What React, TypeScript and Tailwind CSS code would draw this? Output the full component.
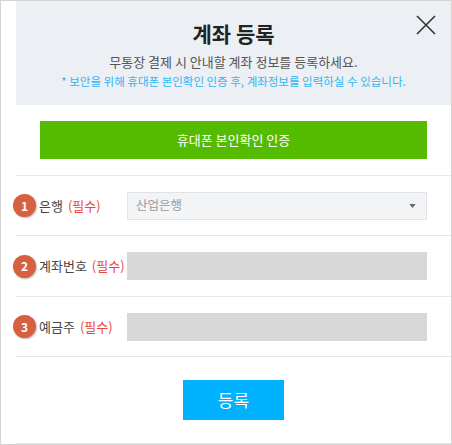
const FONT = { fontFamily: '"Noto Sans CJK KR", "Noto Sans", sans-serif' };

const rows = [
  { no: 1, label: '은행', kind: 'select' as const, h: 'h-[60px]' },
  { no: 2, label: '계좌번호', kind: 'input' as const, h: 'h-[61px]' },
  { no: 3, label: '예금주', kind: 'input' as const, h: 'h-[60px]' },
];

function Badge({ no }: { no: number }) {
  return (
    <span className="-ml-[3px] mr-[3px] flex h-[23px] w-[23px] shrink-0 items-center justify-center rounded-full bg-[#d6603f] text-[12px] font-bold text-white shadow-[1px_1px_2px_rgba(0,0,0,0.25)]">
      {no}
    </span>
  );
}

export default function App() {
  return (
    <div style={FONT} className="h-[445px] w-[452px] border border-[#d4d4d4] bg-white pl-[15px]">
      <div className="flex h-full flex-col border-b border-[#e6e6e6]">
        {/* Header */}
        <header className="relative h-[104px] shrink-0 bg-[#eceff3] pt-[18px] text-center">
          <h1 className="text-[21px] font-bold leading-[28px] text-[#222]">계좌 등록</h1>
          <p className="mt-[6px] text-[13px] leading-[18px] text-[#555]">
            무통장 결제 시 안내할 계좌 정보를 등록하세요.
          </p>
          <p className="mt-[2px] text-[11.5px] leading-[16px] text-[#2bb7f5]">
            * 보안을 위해 휴대폰 본인확인 인증 후, 계좌정보를 입력하실 수 있습니다.
          </p>
          <button className="absolute right-[14px] top-[13px] h-[22px] w-[22px]" aria-label="닫기">
            <svg viewBox="0 0 22 22" className="h-full w-full" fill="none" stroke="#333" strokeWidth="1.6">
              <path d="M2 2 L20 20 M20 2 L2 20" />
            </svg>
          </button>
        </header>

        {/* Verify */}
        <div className="border-b border-[#e6e6e6] px-[24px] py-[16px]">
          <button className="flex h-[38px] w-full items-center justify-center bg-[#55bb00] text-[13px] text-white">
            휴대폰 본인확인 인증
          </button>
        </div>

        {/* Fields */}
        {rows.map((r) => (
          <div key={r.no} className={`flex ${r.h} items-center border-b border-[#e6e6e6] pr-[24px]`}>
            <div className="flex w-[111px] shrink-0 items-center text-[13px]">
              <Badge no={r.no} />
              <span className="text-[#444]">{r.label}</span>
              <span className="ml-[5px] text-[#e8453c]">(필수)</span>
            </div>
            {r.kind === 'select' ? (
              <div className="flex h-[28px] flex-1 items-center justify-between border border-[#e1e3e6] bg-[#f3f4f6] pl-[8px] pr-[10px] text-[12.5px] text-[#999]">
                <span>산업은행</span>
                <svg viewBox="0 0 8 5" className="h-[4px] w-[7px]" fill="#666">
                  <path d="M0 0 H8 L4 5 Z" />
                </svg>
              </div>
            ) : (
              <div className="h-[28px] flex-1 bg-[#d8d8d8]" />
            )}
          </div>
        ))}

        {/* Submit */}
        <div className="flex flex-1 items-center justify-center">
          <button className="h-[40px] w-[101px] bg-[#00b1fe] text-[17px] text-white">등록</button>
        </div>
      </div>
    </div>
  );
}
